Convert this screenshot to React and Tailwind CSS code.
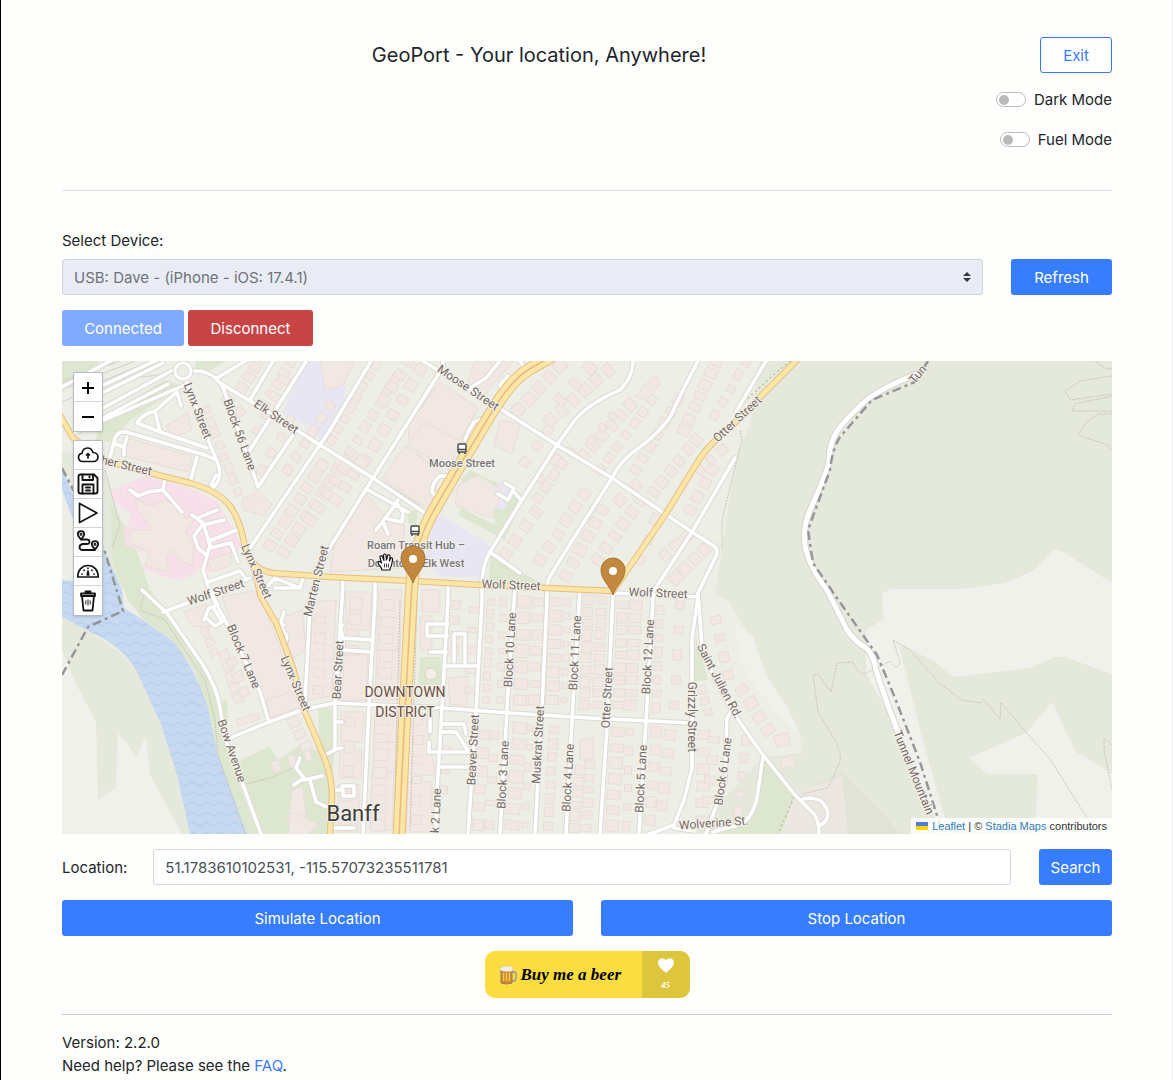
import React from "react";

const EXTENT = "62 361 1050 473";

const FOREST = [
  "M760 360H1112V834H690L763 757L802 753L800 740L770 690L752 640L728 600L715 595L722 550L735 460L750 425Z",
  "M62 612L90 632L120 652L137 672L160 722L177 775L190 834H182L150 775L146 735L137 757L118 733L116 788L98 800L96 722L74 680L62 650Z",
  "M62 452L100 455L115 500L122 545L140 588L122 590L96 538L62 480Z",
];

const CLEARINGS = [
  "M882 600V594L890 589H962L1005 583L1033 571L1052 551L1060 550L1112 583V674L1065 657H1055L1030 668L953 677L937 663L903 645L900 650L920 730L949 834H942L900 735L866 673V630L884 619Z",
  "M969 758L1026 733L1052 702L1076 752L1108 771L1112 775V834H1035L1038 774H987Z",
  "M734 622L753 637L766 675L790 712L802 740L760 692L740 660Z",
];

const PARKS = [
  "M62 361H100L62 392Z",
  "M100 418L165 380L183 386L130 420L110 442L96 440Z",
  "M195 361H225L212 370L196 372Z",
  "M110 500L135 545L150 590L168 612L205 665L222 712L230 760L258 834H247L215 755L207 710L195 672L172 640L142 618L128 600L112 560Z",
  "M222 700H227L228 722L223 724Z",
  "M237 762L270 746L278 760L300 745L322 752L332 790L329 834H262Z",
  "M318 708H331L335 750L330 790L320 755Z",
  "M420 657H441V685H418Z",
  "M470 470L500 485L523 497L516 506L460 480Z",
  "M492 480L523 495L505 540L458 515L461 508L495 525Z",
  "M491 555L520 572L542 583L488 582Z",
  "M696 638L708 680L693 682Z",
  "M765 762L796 795L780 834H716L745 822L758 800Z",
  "M407 514L418 508L416 528L408 522Z",
];

const SOFT_AREAS = [
  ["#f8e0eb", "M112 490L145 476L190 488L217 502L232 527L242 545L225 560L210 572L192 568L200 572L182 580L165 577L142 568L150 555L125 545L124 532L132 515L112 500Z"],
  ["#e9e6f3", "M306 361H345L345 402L325 435L282 413Z"],
  ["#e9e6f3", "M345 361V400L320 442L315 420Z"],
  ["#e9e6f3", "M440 515L490 545L480 578L440 576L424 560L432 525Z"],
  ["#e9e6f3", "M500 482L512 487L505 510L482 505Z"],
  ["#ece8e1", "M795 795L842 775L848 834H782Z"],
];

const BIG_BUILDINGS = [
  "M166 426L188 413L192 430L172 438Z",
  "M128 438L192 456L188 472L124 456Z",
  "M135 498L150 506L166 500L178 508L186 518L196 516L186 532L194 548L192 566L182 562L170 550L166 562L172 572L145 566L150 552L130 544L130 530L152 530L138 510Z",
  "M208 560L232 552L230 566L212 572Z",
  "M222 597L258 590L274 632L290 676L302 708L268 720L245 660Z",
  "M184 612L206 604L210 628L192 626Z",
  "M276 620L302 610L306 650L290 660Z",
  "M314 602L336 600L332 696L306 700Z",
  "M346 592H372L369 630H346Z", "M344 655H368L366 700H342Z",
  "M379 590H402L400 618H378Z", "M378 618H401L400 650H377Z", "M377 650H400L398 700H375Z",
  "M375 714H397L396 742H374Z", "M374 742H396L395 772H373Z", "M372 772H394L392 830H370Z",
  "M341 712H364L362 742H341Z", "M340 750H362L361 778H339Z", "M338 785H360L358 832H338Z",
  "M422 590H440V612H422Z", "M420 616H432V650H420Z",
  "M410 715H428L430 745L436 776L408 774Z", "M408 782H432V832H406Z",
  "M448 678L468 676L467 706L450 704Z",
  "M408 425L440 382L478 408L462 438L448 440L430 468L409 442Z",
  "M408 446L424 422L462 442L448 468Z",
  "M382 478L405 446L440 472L430 510Z",
  "M334 546L366 494L388 520L405 526L400 568L330 572Z",
  "M458 485L478 475L502 490L492 518L455 505Z",
  "M320 361H355L343 385L325 390Z",
  "M475 361H513L485 395L465 390Z",
  "M500 420L520 424L512 454L494 445Z",
  "M242 500L258 492L272 504L264 516L244 510Z",
  "M292 790L303 786L306 818L296 832L288 824Z",
  "M292 812L318 824L308 834H288Z",
  "M267 700L292 692L302 706L270 718Z",
  "M236 720L258 713L260 719L238 726Z",
  "M580 740L594 738V760H580Z",
  "M645 385L656 375L660 383L648 402L636 396Z",
];

/* Rows of houses: start x/y, end x/y, number of houses, base size. */
const HOUSE_ROWS = [
  [206, 410, 238, 492, 8, 9], [228, 400, 240, 412, 2, 9], [242, 388, 262, 356, 4, 10],
  [265, 405, 290, 362, 5, 8], [258, 432, 284, 380, 4, 8], [262, 470, 290, 420, 4, 9],
  [288, 470, 330, 405, 6, 9], [270, 545, 322, 465, 8, 10], [284, 552, 338, 470, 8, 10], [310, 520, 352, 455, 6, 9],
  [332, 440, 376, 365, 8, 9], [350, 452, 396, 378, 7, 9], [366, 460, 420, 370, 7, 10],
  [384, 400, 408, 362, 4, 9], [336, 500, 362, 462, 4, 9],
  [525, 462, 548, 430, 3, 10], [540, 478, 556, 460, 2, 10], [518, 410, 560, 366, 5, 11],
  [550, 420, 608, 370, 6, 10], [560, 400, 590, 368, 3, 9],
  [538, 498, 570, 452, 5, 10], [505, 555, 536, 512, 4, 11], [540, 560, 584, 494, 6, 10], [566, 576, 602, 510, 6, 10],
  [584, 455, 630, 405, 6, 9], [600, 470, 652, 400, 7, 9], [592, 440, 612, 416, 3, 8],
  [636, 470, 678, 400, 7, 9], [654, 492, 696, 440, 6, 9], [684, 430, 716, 362, 7, 9],
  [715, 415, 746, 362, 5, 9], [700, 470, 722, 450, 3, 9], [690, 510, 712, 470, 4, 10],
  [620, 500, 636, 485, 2, 9], [598, 560, 640, 500, 6, 9], [640, 560, 655, 520, 3, 10],
  [665, 555, 688, 535, 3, 11], [676, 578, 704, 550, 4, 11],
  [455, 605, 453, 650, 4, 9], [474, 610, 470, 690, 5, 7],
  [491, 602, 486, 700, 9, 8], [503, 602, 500, 700, 7, 7], [524, 602, 520, 700, 7, 12], [538, 602, 534, 700, 7, 9],
  [556, 602, 552, 700, 8, 10], [568, 602, 564, 700, 8, 7], [589, 600, 584, 705, 10, 10], [602, 600, 597, 705, 10, 9],
  [623, 605, 618, 705, 9, 9], [636, 605, 630, 705, 9, 9], [660, 610, 656, 708, 8, 9], [680, 605, 674, 705, 5, 9],
  [484, 735, 478, 825, 6, 10], [494, 735, 489, 825, 5, 7], [520, 728, 512, 825, 7, 11], [530, 728, 525, 825, 6, 7],
  [554, 730, 548, 826, 8, 9], [580, 770, 574, 828, 6, 9], [590, 765, 586, 828, 6, 8],
  [618, 732, 612, 826, 7, 10], [630, 732, 626, 826, 6, 8], [656, 732, 650, 820, 6, 10], [670, 735, 662, 806, 5, 10],
  [704, 735, 702, 820, 6, 10], [714, 740, 708, 800, 4, 8], [746, 740, 738, 812, 5, 9],
  [702, 690, 708, 712, 3, 8], [716, 620, 728, 675, 4, 9], [742, 690, 768, 730, 4, 10], [782, 740, 788, 762, 2, 11],
  [205, 632, 214, 652, 3, 9], [224, 655, 238, 698, 5, 10], [232, 662, 244, 692, 3, 9], [294, 722, 306, 746, 3, 9],
  [276, 766, 308, 756, 3, 8], [448, 728, 444, 790, 4, 8],
  [320, 620, 318, 690, 5, 10], [356, 604, 352, 650, 4, 11], [388, 605, 384, 690, 6, 11], [382, 720, 378, 825, 7, 11], [350, 722, 346, 820, 5, 11], [418, 720, 416, 820, 6, 9],
];

const WHITE_ROADS = [
  "M423 361L502 410L557 445L612 478L692 532L714 546Q719 550 716 556L698 593",
  "M194 371Q210 370 220 383L260 407L320 445L373 478L428 515",
  "M490 552L520 573",
  "M250 578L215 592L190 602L163 612",
  "M142 590L167 613L203 665Q217 688 220 708L225 738L242 782L261 834",
  "M207 583L213 598L233 635L260 692L269 722",
  "M225 740L269 722L302 710L335 703L443 708L510 713L590 718L690 723",
  "M343 580L342 600L335 703V750L325 755",
  "M375 580V600L369 705L363 834",
  "M448 582V600L442 708L437 792L436 834",
  "M633 361Q633 377 620 390Q585 405 572 424L557 445L522 500L490 552Q482 565 482 585V600L476 712L468 834",
  "M515 587L508 692L500 834",
  "M698 361L683 390L670 417Q660 432 640 447Q620 460 612 478L580 528L549 578Q547 583 547 600L542 708L535 834",
  "M580 590L573 702L566 834",
  "M613 593L607 728L600 834",
  "M735 458L692 532L653 592V600L646 722L639 834",
  "M613 593L698 597L692 638V768L684 800L674 825L647 835",
  "M698 593L702 645Q708 670 737 718L763 755L795 795L814 814Q819 820 819 834",
  "M803 799Q814 797 821 801Q832 812 825 822L819 826",
  "M732 710L727 718L725 782L706 834",
  "M763 757L757 798Q752 820 738 825L713 832M674 828L695 831",
  "M60 388L112 360", "M80 396L157 360", "M100 394L163 363", "M103 408L175 369", "M72 434L187 384",
  "M103 418L168 384", "M183 360V364",
  "M186 380L207 437L218 464Q222 476 217 483L213 488M216 475L211 485",
  "M222 385L243 443L258 487L293 435", "M250 450L307 360", "M217 378L247 360", "M250 400L273 361",
  "M250 548L330 430L371 361", "M310 600L327 552L373 478L443 367V361", "M310 605L305 703",
  "M110 457L115 438Q118 431 126 432L205 455L214 459M115 444L124 447L127 437M124 447V455",
  "M207 448L160 432L137 423Q141 415 155 411L177 392L181 406M155 411L160 432",
  "M197 457L190 482", "M165 478L163 490L182 512M163 490L148 492L138 496L130 490",
  "M192 515L203 523L210 545L203 570L207 583", "M237 530L209 541", "M224 520L203 525", "M217 510L200 517",
  "M203 524L194 536L198 548L206 555", "M210 548L231 543L238 562", "M208 582L240 571L246 579",
  "M213 597L218 605L209 608L204 620M213 607L222 622L215 626L206 618",
  "M268 586L275 578L300 588H275M300 588L303 578",
  "M284 612L280 626L287 636L285 646M276 625L284 625",
  "M300 758L296 768L304 778L294 785M304 780L322 776M310 780L316 802L329 808",
  "M343 625H340L343 638L372 640M343 638V650L371 652", "M335 722H342M334 749L342 748",
  "M332 790H342V786H354V796H343V790M332 828H354",
  "M448 624H427V636H447M430 652H446M454 634H465V664M454 634V662M445 666H477",
  "M430 712V732M429 742V752L468 752M442 724H464L466 734M442 732H456L468 751M440 767H468",
  "M368 490L408 512M398 500L390 512L376 530M388 519L402 522L403 512L396 502M383 522L388 534",
  "M500 361L486 378L470 388", "M520 361L526 370", "M513 382L503 392L500 385L508 376",
  "M484 418L474 422L468 432L465 440", "M447 476H440Q432 482 432 492L438 500M451 470L449 464",
  "M505 483L514 488L508 500L498 494M514 492L521 500",
  "M766 361L736 412",
];

const TUNNEL_ROAD =
  "M921 372L900 381Q875 392 862 404Q845 420 838 430Q829 442 829 462Q826 475 810 510Q803 525 805 545Q808 565 827 590L847 630Q853 640 866 648Q874 655 876 670Q882 690 898 732";
const PARK_BOUNDARY =
  "M928 361L915 382L872 400L840 437Q832 450 830 470L808 530L813 563L837 598L877 655L895 698L920 762L941 828";

const YELLOW_ROADS = [
  "M58 412L73 438L103 460L150 473L190 483Q218 491 230 506Q240 520 244 542Q248 568 272 573L330 577L413 581L480 585L613 591L665 515L697 463Q705 450 715 441L741 417L760 397L799 358",
  "M249 556Q256 570 260 595L277 625L293 668L305 712L322 752Q332 775 332 795L330 836",
];
const AVENUE =
  "M399 836L405 712L411 600L413 570Q418 540 431 515L463 460L493 410Q513 377 533 367L552 356";

const TRAILS = [
  "M740 430L742 440L733 475L722 520L722 550", "M1112 376L1080 381L1065 391L1070 400L1112 394",
  "M1112 396L1075 404L1072 411L1112 411", "M1112 414H1098L1086 423L1078 435L1108 445L1112 450",
  "M1095 361L1105 368L1112 369",
  "M802 794L828 788L840 762Q842 750 830 732L818 712L813 675L818 674L831 692L837 663L853 662Q858 676 866 673Q878 668 890 661Q897 672 900 662L893 640L910 650L940 684L962 700L981 703L983 699L1000 719L1001 702L1024 730L1050 759L1087 818",
  "M1112 745L1104 738L1104 750L1112 790", "M242 785L270 778L300 765",
  "M105 470L120 525L112 548", "M380 480L420 505", "M145 592L140 610L165 620L205 680L215 720L218 755L245 834",
  "M400 600L394 832M417 600L410 830", "M62 402L112 380L190 372",
];

const STREET_LABELS = [
  ["Lynx Street", 194, 412, 69], ["Block 56 Lane", 236, 436, 70], ["Elk Street", 274, 420, 34],
  ["Gopher Street", 115, 467, 13], ["Lynx Street", 253, 573, 66], ["Marten Street", 320, 582, -76],
  ["Wolf Street", 217, 596, -19], ["Block 7 Lane", 240, 658, 67], ["Lynx Street", 292, 685, 67],
  ["Bow Avenue", 228, 752, 71], ["Bear Street", 342, 670, -87], ["Beaver Street", 477, 750, -87],
  ["Block 3 Lane", 507, 775, -87], ["Muskrat Street", 542, 745, -87], ["Block 4 Lane", 572, 778, -87],
  ["Block 10 Lane", 514, 650, -87], ["Block 11 Lane", 579, 653, -87], ["k 2 Lane", 440, 811, -87],
  ["Otter Street", 611, 698, -87], ["Block 12 Lane", 652, 657, -87], ["Grizzly Street", 688, 717, 90],
  ["Saint Julien Rd.", 716, 683, 62], ["Block 5 Lane", 645, 779, -87], ["Block 6 Lane", 727, 772, -82],
  ["Wolverine St.", 714, 827, -4], ["Otter Street", 740, 422, -43], ["Moose Street", 466, 391, 34],
  ["Wolf Street", 511, 589, 2], ["Wolf Street", 658, 597, 2],
  ["Tunnel Mountain", 910, 774, 68], ["Tun", 921, 377, -50],
];

const PLACE_LABELS = [
  ["Moose Street", 462, 467], ["Roam Transit Hub –", 416, 549], ["Downtown Elk West", 416, 567],
];

function Houses() {
  return HOUSE_ROWS.flatMap(([x1, y1, x2, y2, n, size], row) => {
    const angle = (Math.atan2(y2 - y1, x2 - x1) * 180) / Math.PI;
    return Array.from({ length: n }, (_, i) => {
      const t = n === 1 ? 0 : i / (n - 1);
      const w = size + ((i * 7 + row * 3) % 4) - 2;
      const h = size + ((i * 5 + row * 11) % 5) - 1;
      return (
        <rect
          key={`${row}-${i}`}
          x={-w / 2} y={-h / 2} width={w} height={h}
          transform={`translate(${Math.round(x1 + (x2 - x1) * t)} ${Math.round(y1 + (y2 - y1) * t)}) rotate(${Math.round(angle)})`}
        />
      );
    });
  });
}

function Roads({ paths, casing, fill, width }) {
  return (
    <g fill="none" strokeLinecap="round" strokeLinejoin="round">
      <g stroke={casing} strokeWidth={width + 2}>{paths.map((d, i) => <path key={i} d={d} />)}</g>
      <g stroke={fill} strokeWidth={width}>{paths.map((d, i) => <path key={i} d={d} />)}</g>
    </g>
  );
}

function TramStop({ x, y }) {
  return (
    <g transform={`translate(${x} ${y})`} fill="none" stroke="#44474a" strokeWidth="1.4">
      <rect x="-4" y="-5" width="8" height="8" rx="1" fill="#fff" />
      <path d="M-4 0.5H4M-3 3V5M3 3V5" />
    </g>
  );
}

function Pin({ x, y }) {
  return (
    <g transform={`translate(${x} ${y})`}>
      <path d="M0 0C-2 -8 -12 -15 -12 -25A12 12 0 0 1 12 -25C12 -15 2 -8 0 0Z" fill="#c2883f" stroke="#a8742f" strokeWidth="1" />
      <circle cx="0" cy="-24" r="4" fill="#fff" />
    </g>
  );
}

function StreetMap() {
  return (
    <svg viewBox={EXTENT} preserveAspectRatio="xMidYMid slice" className="block h-auto w-full" role="img" aria-label="Map of Banff">
      <defs>
        <pattern id="waves" width="14" height="10" patternUnits="userSpaceOnUse">
          <rect width="14" height="10" fill="#c6d9f0" />
          <path d="M0 4Q3.500 7 7 4T14 4" fill="none" stroke="#b9cfec" strokeWidth="1.300" />
        </pattern>
      </defs>
      <rect x="62" y="361" width="1050" height="473" fill="#edeee5" />
      <path d="M62 640L90 632L165 720L190 834H62Z" fill="#f1f1ec" />
      <g fill="#e5e9dc">{FOREST.map((d) => <path key={d} d={d} />)}</g>
      <path d="M815 785L842 772L880 810L900 834H820Z" fill="#e0e3d5" />
      <g fill="#f1f1eb">{CLEARINGS.map((d) => <path key={d} d={d} />)}</g>
      <g fill="#dde7cf">{PARKS.map((d) => <path key={d} d={d} />)}</g>
      <g>{SOFT_AREAS.map(([fill, d]) => <path key={d} d={d} fill={fill} />)}</g>
      <path d="M62 468L75 500L103 547L122 590L124 608L143 620L173 641Q195 668 207 705L217 752L247 834H190L177 775L160 722L137 672Q122 645 90 632L62 617V580L90 582L92 560L70 512L62 490Z" fill="url(#waves)" />
      <g fill="#f1e8e3" stroke="#e9ddd8" strokeWidth="1">
        {BIG_BUILDINGS.map((d) => <path key={d} d={d} />)}
        <Houses />
      </g>
      <g fill="none" stroke="#cfcfc9" strokeWidth="1">
        <path d="M62 382L120 361M66 388L135 361M80 391L150 361" />
      </g>
      <g fill="none" stroke="#cdc3bb" strokeWidth="1" strokeDasharray="2 1">{TRAILS.map((d) => <path key={d} d={d} />)}</g>
      <g fill="none" stroke="#b9c48f" strokeWidth="1.500" strokeDasharray="2 3">
        <path d="M744 402L770 378L790 361M742 405L768 361M794 797L778 834M765 762L757 800" />
      </g>
      <Roads paths={WHITE_ROADS} casing="#dcdad5" fill="#ffffff" width={3.5} />
      <circle cx="183" cy="371" r="8" fill="#edeee5" stroke="#dcdad5" strokeWidth="5" />
      <circle cx="183" cy="371" r="8" fill="none" stroke="#fff" strokeWidth="3" />
      <circle cx="431" cy="674" r="6" fill="#f1efe6" stroke="#d8d3c6" strokeWidth="1" />
      <Roads paths={[TUNNEL_ROAD]} casing="#d6d5d0" fill="#ffffff" width={5} />
      <g fill="none" stroke="#96969a" strokeWidth="2.500" strokeDasharray="9 4 3 4">
        <path d={PARK_BOUNDARY} />
        <path d="M62 675L88 627L123 611L105 552L62 468" />
      </g>
      <Roads paths={YELLOW_ROADS} casing="#e8bd83" fill="#fbe6a6" width={4.5} />
      <Roads paths={[AVENUE]} casing="#e8bd83" fill="#fbe6a6" width={11} />
      <path d={AVENUE} fill="none" stroke="#e9b97f" strokeWidth="1.500" />
      <TramStop x={462} y={449} />
      <TramStop x={415} y={531} />
      <g fontFamily="Roboto, sans-serif" fontSize="12" textAnchor="middle" fill="#746a66" stroke="#f4f2ec" strokeWidth="2" paintOrder="stroke" strokeLinejoin="round">
        {STREET_LABELS.map(([text, x, y, angle]) => (
          <text key={`${text}-${x}`} transform={`translate(${x} ${y}) rotate(${angle})`}>{text}</text>
        ))}
        <g fontSize="11" fill="#77777a" fontWeight="500">
          {PLACE_LABELS.map(([text, x, y]) => <text key={text} x={x} y={y}>{text}</text>)}
        </g>
        <g fontSize="14" fill="#6b4f45">
          <text x="405" y="697">DOWNTOWN</text>
          <text x="405" y="717">DISTRICT</text>
        </g>
        <text x="353" y="821" fontSize="22" fill="#3d3d3f">Banff</text>
      </g>
      <Pin x={413} y={583} />
      <Pin x={613} y={595} />
      <g transform="translate(377 553)" fill="#fff" stroke="#111" strokeWidth="1.200" strokeLinejoin="round" strokeLinecap="round">
        <path d="M5 17C5 14 1 12 1 9.500C1 8 3 8 4.500 10L3 4.500C2.500 2.500 5 2 5.500 4L7 7.500L6.500 2.500C6.500 0.500 9 0.500 9 2.500L9.500 7L10.500 3C11 1 13 1.500 13 3.500L12.500 8L13.500 5.500C14.500 4 16 5 15.500 7C15 10 15 13 13 15.500V17Z" />
        <path d="M7.500 11V14M9.500 11V14M11.500 11V14" strokeWidth="0.800" />
      </g>
    </svg>
  );
}

function Icon({ children, width = 1.7 }) {
  return (
    <svg viewBox="0 0 24 24" className="size-6" fill="none" stroke="#151515" strokeWidth={width} strokeLinecap="round" strokeLinejoin="round" aria-hidden="true">
      {children}
    </svg>
  );
}

const TOOLS = [
  ["Upload route", <Icon key="i">
    <path d="M7 18.500C3.500 18.500 2.500 16.500 2.500 14.300C2.500 12 4 10.500 6 10.300C6.500 7 8.700 5 11.500 5C14.200 5 16.300 7 17 9.500C20 9.500 22 11.500 22 14C22 16.500 20.200 18.500 17.500 18.500Z" />
    <path d="M12 15V10.500M10.500 12L12 10.500L13.500 12" />
  </Icon>],
  ["Save route", <Icon key="i" width={1.9}>
    <path d="M5 2.500H18L21.500 6V19.500Q21.500 21.500 19.500 21.500H4.500Q2.500 21.500 2.500 19.500V4.500Q2.500 2.500 4.500 2.500Z" />
    <path d="M6.500 2.500V8H17V2.500M6.500 21.500V12.500H17.500V21.500M10 15.500H14M10 18.500H14M13.500 4.500V5.500" />
  </Icon>],
  ["Play route", <Icon key="i"><path d="M3.500 2.500V21.500L21 12Z" /></Icon>],
  ["Draw route", <Icon key="i" width={1.8}>
    <path d="M5 9.500C3 7 1.800 6 1.800 4.300A3.200 3.200 0 0 1 8.200 4.300C8.200 6 7 7 5 9.500Z" />
    <circle cx="5" cy="4.300" r="0.600" />
    <path d="M19 19.500C17 17 15.800 16 15.800 14.300A3.200 3.200 0 0 1 22.200 14.300C22.200 16 21 17 19 19.500Z" />
    <circle cx="19" cy="14.300" r="0.600" />
    <path d="M5 9.500H10.500Q13.500 9.500 13.500 11.800T10.500 14H7Q3.500 14.500 3.500 17.200T7 20H19" />
  </Icon>],
  ["Speed", <Icon key="i">
    <path d="M1.800 18C1.800 11 6 6.500 12 6.500S22.200 11 22.200 18Z" />
    <path d="M12 12L11.300 16H12.700ZM12 9.200V9.300M6 15H6.100M17.900 15H18M8 11.200L8.100 11.300M16 11.200L15.900 11.300" />
  </Icon>],
  ["Delete route", <Icon key="i" width={1.8}>
    <path d="M6 7L7.500 21.500H16.500L18 7M5 4.500H19V7H5ZM9.500 4V2.500H14.500V4" />
    <path d="M9.500 12V15M11.200 11V16M12.800 11V16M14.500 12V15" strokeWidth="0.700" />
  </Icon>],
];

function MapControls() {
  return (
    <div className="absolute top-[11px] left-[11px] flex flex-col gap-2">
      <div className="flex w-[30px] flex-col rounded-xs border border-gray-400/70 bg-white shadow-sm">
        <button type="button" aria-label="Zoom in" className="flex h-[29px] items-center justify-center border-b border-gray-300 pt-[2px]">
          <svg viewBox="0 0 14 14" className="size-3.5" stroke="#000" strokeWidth="2"><path d="M1 7H13M7 1V13" /></svg>
        </button>
        <button type="button" aria-label="Zoom out" className="flex h-[29px] items-center justify-center">
          <svg viewBox="0 0 14 14" className="size-3.5" stroke="#000" strokeWidth="2"><path d="M1 7H13" /></svg>
        </button>
      </div>
      <div className="flex w-[30px] flex-col divide-y divide-gray-300 rounded-xs border border-gray-400/70 bg-white shadow-sm">
        {TOOLS.map(([label, icon]) => (
          <button key={label} type="button" aria-label={label} className="flex h-[29px] items-center justify-center">{icon}</button>
        ))}
      </div>
    </div>
  );
}

function Toggle({ id, label }) {
  return (
    <div className="flex items-center justify-end gap-2">
      <input
        id={id}
        type="checkbox"
        role="switch"
        className="flex h-[15px] w-[30px] appearance-none items-center rounded-full border border-[#b9bcbf] bg-white pl-[2px] before:size-[10px] before:rounded-full before:bg-[#b9bab8] checked:bg-[#377dff] checked:before:ml-[14px] checked:before:bg-white"
      />
      <label htmlFor={id}>{label}</label>
    </div>
  );
}

const primary = "h-9 rounded-[3px] bg-[#377dff] text-white";

export default function App() {
  return (
    <div className="min-h-screen border-r border-l border-r-[#ededf0] border-l-black bg-[#fefefd] font-['Inter','Liberation_Sans',sans-serif] text-[15px] leading-[23px] text-[#212529]">
      <div className="pt-[37px] pr-[60px] pb-1 pl-[61px]">
        <header>
          <div className="flex items-center">
            <h1 className="flex-1 text-center text-[20px] leading-9">GeoPort - Your location, Anywhere!</h1>
            <div className="flex w-24 justify-end">
              <button type="button" className="h-9 w-[72px] rounded-[3px] border border-[#377dff] bg-white text-[#377dff]">Exit</button>
            </div>
          </div>
          <div className="mt-[15px] flex flex-col gap-[17px]">
            <Toggle id="dark-mode" label="Dark Mode" />
            <Toggle id="fuel-mode" label="Fuel Mode" />
          </div>
        </header>
        <hr className="mt-[39px] border-[#e0e0e8]" />

        <main>
          <label htmlFor="device" className="mt-[38px] block">Select Device:</label>
          <div className="mt-[7px] flex gap-7">
            <div className="relative flex-1">
              <select id="device" disabled className="h-9 w-full appearance-none rounded-[3px] border border-[#cfd3da] bg-[#e9ecf4] px-[11px] text-[#6e7379] opacity-100">
                <option>USB: Dave - (iPhone - iOS: 17.4.1)</option>
              </select>
              <svg viewBox="0 0 8 10" className="pointer-events-none absolute top-[13px] right-3 h-[10px] w-2" fill="#343a40" aria-hidden="true">
                <path d="M4 0L8 4H0ZM4 10L0 6H8Z" />
              </svg>
            </div>
            <button type="button" className={`${primary} w-[101px]`}>Refresh</button>
          </div>
          <div className="mt-[15px] flex gap-1">
            <button type="button" disabled className="h-9 w-[122px] rounded-[3px] bg-[#7faafe] text-white">Connected</button>
            <button type="button" className="h-9 w-[125px] rounded-[3px] bg-[#c94545] text-white">Disconnect</button>
          </div>

          <section aria-label="Map" className="relative mt-[15px] overflow-hidden">
            <StreetMap />
            <MapControls />
            <div className="absolute right-0 bottom-0 flex items-center gap-1 bg-white/80 px-[5px] font-['Liberation_Sans',sans-serif] text-[11px] leading-4 text-[#333]">
              <svg viewBox="0 0 12 8" className="h-2 w-3" aria-hidden="true">
                <path fill="#4c7be1" d="M0 0h12v4H0z" />
                <path fill="#ffd500" d="M0 4h12v4H0z" />
              </svg>
              <p>
                <a href="#leaflet" className="text-[#2f7fbd]">Leaflet</a> | © <a href="#stadia" className="text-[#2f7fbd]">Stadia Maps</a> contributors
              </p>
            </div>
          </section>

          <div className="mt-[15px] flex items-center gap-[26px]">
            <label htmlFor="location">Location:</label>
            <div className="flex min-w-0 flex-1 gap-7">
              <input id="location" type="text" defaultValue="51.1783610102531, -115.57073235511781" className="h-9 min-w-0 flex-1 rounded-[3px] border border-[#d4d7e2] bg-white px-[11px] text-[#495057]" />
              <button type="button" className={`${primary} w-[73px]`}>Search</button>
            </div>
          </div>
          <div className="mt-[15px] grid grid-cols-2 gap-7">
            <button type="button" className={primary}>Simulate Location</button>
            <button type="button" className={primary}>Stop Location</button>
          </div>

          <a href="#beer" className="mx-auto mt-[15px] flex h-[47px] w-[205px] overflow-hidden rounded-[10px] bg-[#fbdd42] text-black">
            <span className="flex flex-1 items-center gap-1 pl-[14px]">
              <svg viewBox="0 0 18 20" className="h-5 w-[18px]" aria-hidden="true">
                <path d="M12 7H15Q17 7 17 9V13Q17 15.500 14.500 16H12" fill="none" stroke="#a9a296" strokeWidth="1.800" />
                <path d="M2 4H13V18Q7.500 20 2 18Z" fill="#d08a25" stroke="#8d7a5b" strokeWidth="1" />
                <path d="M4.500 8V16M7.500 8V16M10.500 8V16" stroke="#f4c45c" strokeWidth="1.500" />
                <path d="M1 5Q0 2 3.500 2Q6 0 8.500 1.500Q13 0 14 3.500Q14.500 6.500 11 6.500Q5 7.500 1 5Z" fill="#f4efe4" stroke="#c9bfa9" strokeWidth="0.500" />
              </svg>
              <span className="font-['Liberation_Serif',serif] text-[17px] font-bold italic">Buy me a beer</span>
            </span>
            <span className="flex w-12 flex-col items-center bg-[#dec63c] pt-[7px] text-white">
              <svg viewBox="0 0 16 15" className="h-[15px] w-4" fill="#fff" aria-hidden="true">
                <path d="M8 15C5 12 0 9 0 4.500C0 0 6 -1.500 8 2.500C10 -1.500 16 0 16 4.500C16 9 11 12 8 15Z" />
              </svg>
              <span className="font-['Liberation_Serif',serif] text-[9px] leading-6 font-bold italic">45</span>
            </span>
          </a>
        </main>

        <hr className="mt-4 border-[#c9c9c9]" />
        <footer className="mt-4">
          <p>Version: 2.2.0</p>
          <p>Need help? Please see the <a href="#faq" className="text-[#377dff]">FAQ</a>.</p>
        </footer>
      </div>
    </div>
  );
}
